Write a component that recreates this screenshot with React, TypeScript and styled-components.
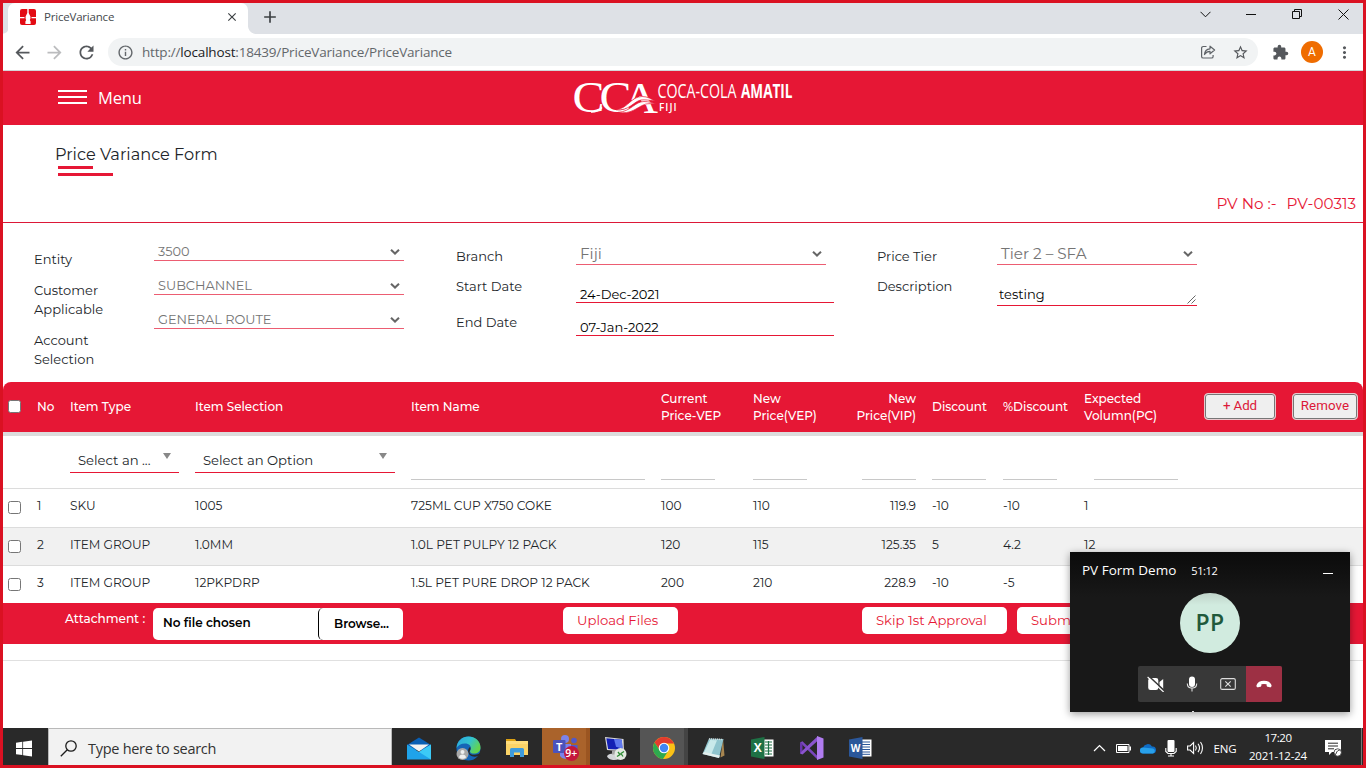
import React from 'react';
import styled, { createGlobalStyle, css } from 'styled-components';
import {
  MdAdd,
  MdArrowBack,
  MdArrowForward,
  MdClose,
  MdExtension,
  MdInfoOutline,
  MdMoreVert,
  MdRefresh,
  MdStarBorder,
} from 'react-icons/md';

const RED = '#e61735';
const BODY = "Montserrat, Inter, 'Liberation Sans', sans-serif";
const SYSTEM = "'Segoe UI', 'Open Sans', 'Noto Sans', sans-serif";

const GlobalStyle = createGlobalStyle`
  *, *::before, *::after { box-sizing: border-box; }
  html, body { margin: 0; padding: 0; background: #fff; overflow: hidden; }
  svg { display: block; flex: none; }
`;

const Screen = styled.div`
  width: 1366px;
  height: 768px;
  border: 3px solid #da1122;
  display: flex;
  flex-direction: column;
  background: #fff;
  position: relative;
  overflow: hidden;
  font-family: ${BODY};
  color: #212529;
`;

const Txt = styled.span<{ $ls?: number }>`
  letter-spacing: ${(p) => p.$ls ?? 0}px;
  white-space: nowrap;
`;

/* ---------- browser ---------- */

const TabStrip = styled.div`
  height: 31px;
  background: #dee1e6;
  display: flex;
  align-items: stretch;
  font-family: ${SYSTEM};
  flex: none;
`;

const StripEdge = styled.div`
  width: 5px;
  background: radial-gradient(circle at 0 0, transparent 5px, #fff 6px) no-repeat 0 100% / 5px 6px;
`;

const Tab = styled.div`
  width: 240px;
  background: #fff;
  border-radius: 7px 7px 0 0;
  display: flex;
  align-items: center;
  padding: 0 9px 3px 12px;
  font-size: 11.5px;
  color: #45494d;
`;

const TabTitle = styled(Txt)`
  margin-left: 8px;
  margin-top: -1px;
  flex: 1;
`;

const TabFoot = styled.div`
  width: 8px;
  background: radial-gradient(circle at 100% 0, #dee1e6 7.5px, #fff 8.3px) no-repeat 0 100% / 8px 8px;
`;

const NewTab = styled.div`
  width: 28px;
  display: flex;
  align-items: center;
  justify-content: center;
  padding-bottom: 4px;
  color: #3c4043;
`;

const WindowButtons = styled.div`
  margin-left: auto;
  display: flex;
  padding-bottom: 9px;
`;

const WindowButton = styled.div<{ $last?: boolean }>`
  width: ${(p) => (p.$last ? 43 : 46)}px;
  padding-left: ${(p) => (p.$last ? 3 : 0)}px;
  display: flex;
  align-items: center;
  justify-content: center;
`;

const Toolbar = styled.div`
  height: 37px;
  flex: none;
  display: flex;
  align-items: center;
  padding-left: 3px;
  border-bottom: 1px solid #d4d6d8;
  font-family: ${SYSTEM};
`;

const ToolSlot = styled.div<{ $muted?: boolean }>`
  width: 32px;
  display: flex;
  justify-content: center;
  color: ${(p) => (p.$muted ? '#bbbcbe' : '#55585c')};
`;

const AddressBar = styled.div`
  width: 1150px;
  height: 28px;
  margin: 0 6px;
  border-radius: 14px;
  background: #f1f3f4;
  display: flex;
  align-items: center;
  padding: 0 8px 0 9px;
  font-size: 13.5px;
  color: #63676b;
`;

const Url = styled(Txt)`
  margin-left: 8px;
  flex: 1;
  b { font-weight: 400; color: #202124; }
`;

const AddressSlot = styled.div`
  width: 44px;
  display: flex;
  justify-content: center;
  &:last-child { width: 20px; }
`;

const Profile = styled.div`
  width: 22px;
  height: 22px;
  border-radius: 50%;
  background: #ef6c00;
  color: #fff;
  font: 12px/22px Roboto, sans-serif;
  text-align: center;
`;

/* ---------- page ---------- */

const Masthead = styled.header`
  height: 54px;
  flex: none;
  background: ${RED};
  display: flex;
  align-items: center;
  padding-left: 55px;
`;

const MenuToggle = styled.div`
  display: flex;
  align-items: center;
  width: 515px;
  color: #fff;
  font: 16.5px/22px ${SYSTEM};
`;

const Bars = styled.div`
  width: 29px;
  height: 14px;
  margin-right: 11px;
  margin-bottom: 2px;
  border-top: 2px solid #fff;
  border-bottom: 2px solid #fff;
  display: flex;
  align-items: center;
  &::before { content: ''; height: 2px; flex: 1; background: #fff; }
`;

const TitleArea = styled.section`
  height: 98px;
  flex: none;
  border-bottom: 1px solid #dc1838;
  display: flex;
  justify-content: space-between;
  padding: 19px 7px 0 52px;
`;

const Heading = styled.h1`
  margin: 0;
  font-size: 16.2px;
  line-height: 20px;
  font-weight: 400;
`;

const Underline = styled.div<{ $w: number; $top: number }>`
  width: ${(p) => p.$w}px;
  height: 3px;
  margin: ${(p) => p.$top}px 0 0 3px;
  background: ${RED};
`;

const VarianceNo = styled.div`
  align-self: flex-end;
  display: flex;
  gap: 10px;
  font-size: 15.2px;
  line-height: 20px;
  color: ${RED};
  margin-bottom: 8px;
`;

const Form = styled.section`
  height: 159px;
  flex: none;
  display: grid;
  grid-template-columns: 422px 421px 1fr;
  padding-left: 31px;
`;

const FormColumn = styled.div`
  display: grid;
  grid-template-columns: 120px 1fr;
  align-items: start;
`;

const Stack = styled.div<{ $top: number }>`
  display: flex;
  flex-direction: column;
  align-items: flex-start;
  padding-top: ${(p) => p.$top}px;
`;

const Label = styled.label<{ $gap?: number }>`
  font-size: 13px;
  line-height: 19px;
  margin-bottom: ${(p) => p.$gap ?? 12}px;
`;

const SelectBox = styled.div<{ $w: number; $large?: boolean }>`
  width: ${(p) => p.$w}px;
  height: ${(p) => (p.$large ? 22 : 18)}px;
  margin-bottom: 16px;
  padding: 0 4px;
  border-bottom: 1px solid #ec5d72;
  display: flex;
  align-items: center;
  justify-content: space-between;
  font-size: ${(p) => (p.$large ? 15.2 : 12.9)}px;
  color: #747474;
`;

const InputBox = styled.div<{ $w: number; $h: number; $gap?: number; $indent?: number }>`
  width: ${(p) => p.$w}px;
  height: ${(p) => p.$h}px;
  margin-bottom: ${(p) => p.$gap ?? 0}px;
  padding: 4px 0 0 ${(p) => p.$indent ?? 4}px;
  border-bottom: 1px solid ${RED};
  display: flex;
  align-items: flex-start;
  justify-content: space-between;
  font-size: 13px;
  line-height: 18px;
  color: #000;
`;

const Grip = styled.svg`
  align-self: flex-end;
  margin: 0 1px 1px 0;
`;

/* ---------- item grid ---------- */

const gridColumns = css`
  display: grid;
  grid-template-columns: 29px 33px 125px 216px 250px 92px 92px 87px 71px 81px 120px 88px 66px;
  padding-left: 5px;
`;

const GridHead = styled.div`
  ${gridColumns}
  height: 54px;
  flex: none;
  align-items: center;
  background: ${RED};
  border-bottom: 4px solid #dcdcdc;
  border-radius: 8px 8px 0 0;
  color: #fff;
  font-size: 12px;
  line-height: 17px;
`;

const HeadCell = styled.div<{ $right?: boolean }>`
  display: flex;
  flex-direction: column;
  align-items: ${(p) => (p.$right ? 'flex-end' : 'flex-start')};
  padding-right: ${(p) => (p.$right ? 16 : 0)}px;
  margin-top: -1px;
  font-weight: 550;
`;

const Check = styled.span`
  width: 13px;
  height: 13px;
  border: 1px solid #767676;
  border-radius: 2.5px;
  background: #fff;
  margin-top: -1px;
`;

const GridButton = styled.button<{ $w: number }>`
  width: ${(p) => p.$w}px;
  height: 27px;
  margin: 0 0 2px;
  padding: 0 0 2px;
  border: 1px solid #e9c8cd;
  box-shadow: inset 0 0 0 1px #767676;
  border-radius: 4px;
  background: #efefef;
  color: #dc1838;
  font: 13.33px Roboto, sans-serif;
`;

const FilterRow = styled.div`
  ${gridColumns}
  height: 53px;
  flex: none;
  border-bottom: 1px solid #dcdcdc;
`;

const FilterSelect = styled.div<{ $w: number }>`
  width: ${(p) => p.$w}px;
  height: 37px;
  border-bottom: 1px solid ${RED};
  display: flex;
  justify-content: space-between;
  padding: 15px 8px 0;
  font-size: 13.2px;
  line-height: 19px;
`;

const Caret = styled.span`
  margin-top: 2px;
  height: 0;
  border: 4px solid transparent;
  border-top: 6px solid #888;
  border-bottom: 0;
`;

const FilterInput = styled.div<{ $w: number; $indent?: number }>`
  width: ${(p) => p.$w}px;
  height: 44px;
  margin-left: ${(p) => p.$indent ?? 0}px;
  border-bottom: 1px solid #c8c8c8;
`;

const DataRow = styled.div<{ $shade?: boolean; $h: number; $last?: boolean }>`
  ${gridColumns}
  height: ${(p) => p.$h}px;
  flex: none;
  background: ${(p) => (p.$shade ? '#f1f1f1' : '#fff')};
  border-bottom: ${(p) => (p.$last ? 0 : 1)}px solid #dcdcdc;
  padding-top: 8px;
  font-size: 12.15px;
  line-height: 18px;
  ${Check} { margin-top: 4px; }
`;

const DataCell = styled(Txt)<{ $right?: boolean }>`
  text-align: ${(p) => (p.$right ? 'right' : 'left')};
  padding-right: ${(p) => (p.$right ? 16 : 0)}px;
`;

const ActionBar = styled.div`
  height: 41px;
  flex: none;
  background: ${RED};
  display: flex;
  align-items: flex-start;
  padding-left: 62px;
`;

const AttachmentLabel = styled(Txt)`
  width: 88px;
  margin-top: 6px;
  font-size: 12.1px;
  line-height: 19px;
  font-weight: 500;
  color: #fff;
`;

const FilePicker = styled.div`
  width: 250px;
  height: 32px;
  margin: 5px 160px 0 0;
  background: #fff;
  border-radius: 5px;
  display: flex;
  font-size: 12px;
  line-height: 30px;
  font-weight: 600;
  color: #000;
  overflow: hidden;
`;

const FileName = styled(Txt)`
  width: 165px;
  padding-left: 10px;
`;

const Browse = styled(Txt)`
  flex: 1;
  padding-left: 15px;
  line-height: 32px;
  border-left: 1px solid #000;
  border-radius: 5px;
`;

const ActionButton = styled.button<{ $w: number; $gap: number }>`
  width: ${(p) => p.$w}px;
  height: 27px;
  margin: 4px ${(p) => p.$gap}px 0 0;
  padding: 0 0 0 14px;
  border: 0;
  border-radius: 5px;
  background: #fff;
  color: ${RED};
  text-align: left;
  font: 13.2px/27px ${BODY};
`;

const PageRest = styled.div`
  flex: 1;
  &::before { content: ''; display: block; height: 17px; border-bottom: 1px solid #e0e0e0; }
`;

/* ---------- call window ---------- */

const CallWindow = styled.aside`
  position: absolute;
  left: 1067px;
  top: 549px;
  width: 280px;
  height: 160px;
  background: linear-gradient(#0b0b0b, #181818 45px);
  box-shadow: 0 2px 8px rgba(0, 0, 0, 0.4);
  display: flex;
  flex-direction: column;
  align-items: center;
  color: #fff;
  font-family: ${SYSTEM};
`;

const CallHeader = styled.div`
  width: 100%;
  height: 41px;
  display: flex;
  align-items: center;
  padding: 0 17px 5px 12px;
  font-size: 13.5px;
`;

const CallTime = styled(Txt)`
  margin-left: 15px;
  flex: 1;
  font-size: 11px;
  font-weight: 500;
`;

const Minimize = styled.span`
  width: 10px;
  height: 1px;
  margin-top: 7px;
  background: #fff;
`;

const Avatar = styled.div`
  width: 60px;
  height: 60px;
  border-radius: 50%;
  background: linear-gradient(#bfd3c9, #d1ebdf 12px);
  color: #20593b;
  font-size: 23px;
  line-height: 59px;
  font-weight: 600;
  text-align: center;
`;

const CallControls = styled.div`
  margin-top: 13px;
  display: flex;
  border-radius: 2px;
  overflow: hidden;
  background: #383838;
`;

const CallButton = styled.div<{ $end?: boolean }>`
  width: 36px;
  height: 36px;
  display: flex;
  align-items: center;
  justify-content: center;
  background: ${(p) => (p.$end ? '#9d3044' : 'transparent')};
`;

const CallHandle = styled.span`
  width: 2px;
  height: 1px;
  margin: auto 34px 0 0;
  background: #ddd;
`;

/* ---------- taskbar ---------- */

const Taskbar = styled.footer`
  height: 37px;
  flex: none;
  background: #292929;
  display: flex;
  align-items: stretch;
  font-family: ${SYSTEM};
  color: #fff;
`;

const StartButton = styled.div`
  width: 45px;
  display: flex;
  align-items: center;
  padding: 3px 0 0 13px;
`;

const SearchBox = styled.div`
  width: 344px;
  margin-right: 3px;
  background: #f2f2f2;
  border: 1px solid #b9b9b9;
  border-bottom: 0;
  display: flex;
  align-items: center;
  padding: 3px 0 0 11px;
  gap: 11px;
  font-size: 14.5px;
  color: #333;
`;

const TaskItem = styled.div<{ $bg?: string; $edge?: string }>`
  width: 49px;
  display: flex;
  align-items: center;
  justify-content: center;
  padding: 3px 1px 0 0;
  ${(p) =>
    p.$bg &&
    css`
      background: linear-gradient(90deg, ${p.$bg} 44px, ${p.$edge} 44px, ${p.$edge} 48px, #292929 48px);
    `}
`;

const Tray = styled.div`
  margin-left: auto;
  display: flex;
  align-items: center;
  padding-top: 3px;
  font-size: 11.5px;
`;

const TrayIcon = styled.div<{ $w: number }>`
  width: ${(p) => p.$w}px;
  display: flex;
  justify-content: center;
`;

const Clock = styled.div`
  width: 74px;
  margin: -2px 3px 0 0;
  display: flex;
  flex-direction: column;
  align-items: center;
  line-height: 18px;
`;

const ShowDesktop = styled.div`
  align-self: stretch;
  width: 2px;
  margin-top: -3px;
  border-left: 1px solid #777;
`;

/* ---------- drawings ---------- */

const Chevron = () => (
  <svg width="10" height="7" viewBox="0 0 10 7">
    <path d="M1 1.700 5 5.500 9 1.700" fill="none" stroke="#666" strokeWidth="2" />
  </svg>
);

const Favicon = () => (
  <svg width="16" height="16" viewBox="0 0 16 16">
    <rect width="16" height="16" rx="2" fill="#e30b13" />
    <path d="M0 8.7h4.500M11.500 8.700H16" stroke="#fff" strokeWidth="1.300" />
    <path d="M7.300 0h1.400v4l1.700 3.500v2.300l-.6 1.200.8 1.500V15H5.400v-2.500l.8-1.500-.6-1.200V7.500L7.300 4z" fill="#fff" />
  </svg>
);

const Logo = () => (
  <svg width="230" height="54" viewBox="0 -10 230 54" fill="#fff">
    <text x="50" y="31.500" fontFamily="'Liberation Serif', serif" fontSize="44" textLength="35" lengthAdjust="spacingAndGlyphs">A</text>
    <path d="M46 19h13.500l6 4 2 11H46z" fill={RED} />
    <path d="M60 18h10v6H60z" fill={RED} />
    <path d="M66 15h4.500l4 9H70z" />
    <g fontFamily="'Liberation Serif', serif" fontSize="44">
      <text x="-0.500" y="31" textLength="32" lengthAdjust="spacingAndGlyphs">C</text>
      <text x="26.500" y="31" textLength="32" lengthAdjust="spacingAndGlyphs">C</text>
    </g>
    <g stroke={RED} strokeWidth="0.700">
      <path d="M43 28.700C55 27.500 58 15.500 69 15.500c6 0 9 2.500 13 4.500-6-.8-10-1.500-14-1C61 20 56 30.500 43 28.700z" />
      <path d="M45 31.400C58 30.500 62 20.500 71 20.500c5 0 8 1.300 12 2.300-6-.3-9-.3-12 .9-7 2.600-13 10-26 7.700z" />
    </g>
    <path d="M18 31c5 .300 8-1.500 11-4.500" stroke="#fff" strokeWidth="1.500" fill="none" />
    <g fontFamily="'Open Sans', sans-serif">
      <text x="84.500" y="16.500" fontSize="19.500" textLength="79" lengthAdjust="spacingAndGlyphs">COCA-COLA</text>
      <text x="168" y="16.500" fontSize="19.500" fontWeight="700" textLength="51.500" lengthAdjust="spacingAndGlyphs">AMATIL</text>
      <text x="86" y="29.500" fontSize="10" fontWeight="600" textLength="17.500" lengthAdjust="spacing">FIJI</text>
    </g>
  </svg>
);

const ShareIcon = () => (
  <svg width="16" height="16" viewBox="0 0 16 16" fill="none" stroke="#5f6368" strokeWidth="1.2">
    <path d="M6.500 2.500H3.200a1.600 1.600 0 0 0-1.600 1.600v8.300A1.600 1.600 0 0 0 3.200 14h8.300a1.600 1.600 0 0 0 1.600-1.600V11" />
    <path d="M4.500 10.500C4.700 7 6.500 5 10 4.800V2.200L14.600 6 10 9.800V7.300c-2.500 0-4 .9-5.500 3.200z" strokeLinejoin="round" />
  </svg>
);

const CameraOff = () => (
  <svg width="18" height="16" viewBox="0 0 18 16">
    <path d="M2.500 2H9a2.300 2.300 0 0 1 2.300 2.300v7.400A2.300 2.300 0 0 1 9 14H3.500a2.300 2.300 0 0 1-2.300-2.300V4zM12.500 6l3.700-3v10l-3.700-3z" fill="#fff" />
    <path d="M1.600 0l16 15" stroke="#383838" strokeWidth="1.600" />
    <path d="M.6 1l16 15" stroke="#fff" strokeWidth="1.1" />
  </svg>
);

const CallMic = () => (
  <svg width="12" height="16" viewBox="0 0 12 16">
    <rect x="3" y="0.500" width="6" height="10.500" rx="3" fill="#fff" />
    <path d="M1.300 7.500c0 6.200 9.400 6.200 9.400 0M6 12v3.500" fill="none" stroke="#ddd" strokeWidth="1.100" />
  </svg>
);

const StopShare = () => (
  <svg width="16" height="12" viewBox="0 0 16 12" fill="none" stroke="#ddd" strokeWidth="1.1">
    <rect x="0.700" y="0.600" width="14.600" height="10.800" rx="1.500" />
    <path d="M5.300 3.300l5.400 5.400M10.700 3.300L5.300 8.700" />
  </svg>
);

const HangUp = () => (
  <svg width="16" height="8" viewBox="0 0 16 8">
    <path d="M.5 5.200C1.500 2.300 4.300.8 8 .8s6.500 1.500 7.500 4.400c.3 1.200-.5 2.300-1.700 2l-2-.4c-.8-.200-1.200-.8-1.200-1.600V4.300a9 9 0 0 0-5.200 0v.9c0 .8-.4 1.400-1.200 1.600l-2 .4C1 7.500.2 6.400.5 5.200z" fill="#fff" />
  </svg>
);

const WindowsLogo = () => (
  <svg width="16" height="17" viewBox="0 0 16 17" fill="#fff">
    <path d="M0 2.700l6.300-.9v6.200H0zM7.100 1.700L16 .4V8H7.100zM0 8.900h6.300v6.200L0 14.200zM7.100 8.900H16v7.600l-8.900-1.300z" />
  </svg>
);

const SearchGlass = () => (
  <svg width="17" height="17" viewBox="0 0 17 17" fill="none" stroke="#1d1d1d" strokeWidth="1.3">
    <circle cx="11" cy="6" r="5.200" />
    <path d="M7.300 9.700L.8 16.200" />
  </svg>
);

const MailApp = () => (
  <svg width="24" height="23" viewBox="0 0 24 23">
    <path d="M0 8L12 .5 24 8v5H0z" fill="#0a5fb4" />
    <path d="M0 7.500l12 7.500 12-7.500V22.500H0z" fill="#1fa3ea" />
    <path d="M24 7.500V22.500L12 15z" fill="#3ccaf6" />
    <path d="M2 7.500h20L12 14.500z" fill="#f2f2f2" />
  </svg>
);

const EdgeApp = () => (
  <svg width="25" height="25" viewBox="0 0 25 25">
    <defs>
      <linearGradient id="edgeTop" x1="0" y1="0" x2="1" y2="0.500">
        <stop offset="0" stopColor="#2aa6e0" />
        <stop offset="0.550" stopColor="#33c3d0" />
        <stop offset="1" stopColor="#63d44d" />
      </linearGradient>
    </defs>
    <circle cx="12.500" cy="12.500" r="12" fill="#1565b6" />
    <path d="M.5 12C1 5 6 .5 12.500.5S24.500 5 24.500 11.500c0 4-3 6-6.500 6-4 0-4.500-2-3.500-3.500 1.500-4-1.500-6.500-5.500-6.500C5 7.500 2 9.500.5 12z" fill="url(#edgeTop)" />
    <path d="M14 14.500c-1.500 3 1 4.500 4.500 4.300 2.500-.1 4-.8 5.500-1.800l1-4v6l-3 1c-5 2-10-1-10-5 0-2.500 2-4 2-4 .8 1 .5 2.500 0 3.500z" fill="#292929" />
    <circle cx="6.500" cy="18" r="6" fill="#a9a9a9" />
    <circle cx="6.500" cy="16" r="2" fill="#efefef" />
    <path d="M3 21.500c0-4 7-4 7 0-2 1.800-5 1.800-7 0z" fill="#efefef" />
  </svg>
);

const FolderApp = () => (
  <svg width="22" height="20" viewBox="0 0 22 20">
    <path d="M0 1h9l1.500 2.500H0z" fill="#dba013" />
    <path d="M0 3h22v14H0z" fill="#fbd367" />
    <path d="M0 3h22v3H0z" fill="#ffdd7c" />
    <path d="M4 19v-7.500A1.500 1.500 0 0 1 5.500 10h11a1.500 1.500 0 0 1 1.500 1.500V19h-4v-4.500H8V19z" fill="#3e9bdc" />
  </svg>
);

const TeamsApp = () => (
  <svg width="27" height="26" viewBox="0 0 27 26">
    <circle cx="12" cy="4" r="4" fill="#7b83eb" />
    <circle cx="21" cy="5.500" r="2.800" fill="#5059c9" />
    <path d="M16 10h8.500v8a4 4 0 0 1-6 3z" fill="#5059c9" />
    <path d="M7 9h11v9a6 6 0 0 1-11 3z" fill="#7b83eb" />
    <rect x="0" y="5" width="12.500" height="13" rx="1" fill="#4b53bc" />
    <text x="6.300" y="15.500" textAnchor="middle" fontFamily="'Open Sans', sans-serif" fontWeight="700" fontSize="11" fill="#fff">T</text>
    <circle cx="18.500" cy="18.500" r="7.500" fill="#c4173c" />
    <text x="18.300" y="22.300" textAnchor="middle" fontFamily="'Open Sans', sans-serif" fontWeight="600" fontSize="10.500" fill="#fff">9+</text>
  </svg>
);

const RemoteApp = () => (
  <svg width="24" height="25" viewBox="0 0 24 25">
    <path d="M4 20c3-3 8-3 12-1v4c-4 2-11 1-12-3z" fill="#d3d5d8" />
    <path d="M2 1l18.500 2L21 15.500 4 14z" fill="#dadada" />
    <path d="M3.300 2.300l15.500 1.500.8 10-14.500-.8z" fill="#1420b4" />
    <path d="M11 3l7.800.8.8 9-6.600-2z" fill="#5f78ee" />
    <path d="M9 14.500h5v4H9z" fill="#a6a6a6" />
    <circle cx="17.500" cy="18" r="6" fill="#e4eae2" />
    <path d="M14 20.500l3-2-2-2.500M21 15.500l-3 2 2 3" stroke="#2c8b33" strokeWidth="1.300" fill="none" />
  </svg>
);

const ChromeApp = () => (
  <svg width="22" height="22" viewBox="0 0 22 22">
    <circle cx="11" cy="11" r="11" fill="#fbc116" />
    <path d="M1.500 5.500A11 11 0 0 1 20.500 5.500L21 6.500H11L7 13.500z" fill="#e33b2e" />
    <path d="M1.500 5.500A11 11 0 0 0 10 22L15.500 13.500 7 13.500z" fill="#2da94f" />
    <circle cx="11" cy="11" r="5.300" fill="#fff" />
    <circle cx="11" cy="11" r="4.200" fill="#4285f4" />
  </svg>
);

const NotepadApp = () => (
  <svg width="23" height="22" viewBox="0 0 23 22">
    <path d="M21 1.500l1.500 17-4 2z" fill="#a78550" />
    <path d="M7 1.500l14.500.5-4.500 19L.5 17z" fill="#8fc4cd" />
    <path d="M8 3l7 .3L9 18l-7.500-1.500z" fill="#c9e9ea" />
    <path d="M.5 17l16.500 4 1-2.500L2 15z" fill="#e4efee" />
    <path d="M7 2l14 .500" stroke="#d8dada" strokeWidth="1.500" strokeDasharray="1 1" />
  </svg>
);

const OfficeApp = ({ letter, tint }: { letter: string; tint: string }) => (
  <svg width="23" height="22" viewBox="0 0 23 22">
    <rect x="12" y="2.500" width="10.500" height="17" fill="#fff" />
    {letter === 'W' ? (
      <path d="M13 5h8M13 7.500h8M13 10h8M13 12.500h8M13 15h8M13 17.300h8" stroke={tint} strokeWidth="1" />
    ) : (
      <path d="M14 5h7M14 8h7M14 11h7M14 14h7M14 17h7M17.500 4v14" stroke={tint} strokeWidth="1.200" />
    )}
    <path d="M0 2.500L13.500 0v22L0 19.500z" fill={tint} />
    <text x="6.700" y="15" textAnchor="middle" fontFamily="'Open Sans', sans-serif" fontWeight="700" fontSize={letter === 'W' ? 10 : 12} fill="#fff">{letter}</text>
  </svg>
);

const StudioApp = () => (
  <svg width="25" height="24" viewBox="0 0 25 24">
    <path d="M1 6.500l2.500-1.200L19 20.500V24z" fill="#7a46bd" />
    <path d="M1 6.500L3.500 8v8L1 17.500z" fill="#6a35ac" />
    <path d="M1 17.500l2.500 1L19 4.500V0L3.500 14.500z" fill="#8b54cf" />
    <path d="M18 0l6.500 2.500v19L18 24z" fill="#b07cf0" />
  </svg>
);

const ActionCenter = () => (
  <svg width="17" height="17" viewBox="0 0 17 17">
    <path d="M0 0h16v12h-9l-3 3v-3H0z" fill="#fff" />
    <path d="M3 3.200h10M3 6h10M3 8.800h6" stroke="#292929" strokeWidth="1" />
    <circle cx="12.700" cy="12.500" r="3.700" fill="#fff" stroke="#292929" strokeWidth="0.800" />
    <path d="M14.500 10.500c-3-.5-3 3.500-4.500 4.500" stroke="#292929" strokeWidth="1" fill="none" />
  </svg>
);

/* ---------- data ---------- */

const heads: { lines: string[]; right?: boolean }[] = [
  { lines: ['No'] },
  { lines: ['Item Type'] },
  { lines: ['Item Selection'] },
  { lines: ['Item Name'] },
  { lines: ['Current', 'Price-VEP'] },
  { lines: ['New', 'Price(VEP)'] },
  { lines: ['New', 'Price(VIP)'], right: true },
  { lines: ['Discount'] },
  { lines: ['%Discount'] },
  { lines: ['Expected', 'Volumn(PC)'] },
];

const rows = [
  ['1', 'SKU', '1005', '725ML CUP X750 COKE', '100', '110', '119.9', '-10', '-10', '1'],
  ['2', 'ITEM GROUP', '1.0MM', '1.0L PET PULPY 12 PACK', '120', '115', '125.35', '5', '4.2', '12'],
  ['3', 'ITEM GROUP', '12PKPDRP', '1.5L PET PURE DROP 12 PACK', '200', '210', '228.9', '-10', '-5', ''],
];
const rowHeights = [39, 38, 37];

export default function App() {
  return (
    <Screen>
      <GlobalStyle />
      <TabStrip>
        <StripEdge />
        <Tab>
          <Favicon />
          <TabTitle $ls={-0.2}>PriceVariance</TabTitle>
          <MdClose size={14} color="#3c4043" />
        </Tab>
        <TabFoot />
        <NewTab><MdAdd size={20} /></NewTab>
        <WindowButtons>
          <WindowButton>
            <svg width="11" height="7" viewBox="0 0 11 7"><path d="M.5.800l5 5 5-5" fill="none" stroke="#111" /></svg>
          </WindowButton>
          <WindowButton>
            <svg width="10" height="1" viewBox="0 0 10 1"><path d="M0 .500h10" stroke="#111" /></svg>
          </WindowButton>
          <WindowButton>
            <svg width="10" height="10" viewBox="0 0 10 10" fill="none" stroke="#111"><path d="M.5 2.500h7v7h-7zM2.500 2.500v-2h7v7h-2" /></svg>
          </WindowButton>
          <WindowButton $last>
            <svg width="11" height="11" viewBox="0 0 11 11"><path d="M.5.500l10 10M10.500.500l-10 10" stroke="#111" /></svg>
          </WindowButton>
        </WindowButtons>
      </TabStrip>

      <Toolbar>
        <ToolSlot><MdArrowBack size={21} /></ToolSlot>
        <ToolSlot $muted><MdArrowForward size={21} /></ToolSlot>
        <ToolSlot><MdRefresh size={21} /></ToolSlot>
        <AddressBar>
          <MdInfoOutline size={17} />
          <Url $ls={-0.18}>http://<b>localhost</b>:18439/PriceVariance/PriceVariance</Url>
          <AddressSlot><ShareIcon /></AddressSlot>
          <AddressSlot><MdStarBorder size={17} color="#55585c" /></AddressSlot>
        </AddressBar>
        <ToolSlot><MdExtension size={17} /></ToolSlot>
        <ToolSlot><Profile>A</Profile></ToolSlot>
        <ToolSlot><MdMoreVert size={19} /></ToolSlot>
      </Toolbar>

      <Masthead>
        <MenuToggle>
          <Bars />
          <Txt $ls={-0.15}>Menu</Txt>
        </MenuToggle>
        <Logo />
      </Masthead>

      <TitleArea>
        <div>
          <Heading>Price Variance Form</Heading>
          <Underline $w={35} $top={2} />
          <Underline $w={55} $top={4} />
        </div>
        <VarianceNo>
          <Txt>PV No :-</Txt>
          <Txt>PV-00313</Txt>
        </VarianceNo>
      </TitleArea>

      <Form>
        <FormColumn>
          <Stack $top={27}>
            <Label>Entity</Label>
            <Label>Customer<br />Applicable</Label>
            <Label>Account<br />Selection</Label>
          </Stack>
          <Stack $top={20}>
            <SelectBox $w={250}><Txt>3500</Txt><Chevron /></SelectBox>
            <SelectBox $w={250}><Txt>SUBCHANNEL</Txt><Chevron /></SelectBox>
            <SelectBox $w={250}><Txt>GENERAL ROUTE</Txt><Chevron /></SelectBox>
          </Stack>
        </FormColumn>
        <FormColumn>
          <Stack $top={24}>
            <Label $gap={11}>Branch</Label>
            <Label $gap={17}>Start Date</Label>
            <Label>End Date</Label>
          </Stack>
          <Stack $top={20}>
            <SelectBox $w={250} $large><Txt>Fiji</Txt><Chevron /></SelectBox>
            <InputBox $w={258} $h={22} $gap={11}><Txt>24-Dec-2021</Txt></InputBox>
            <InputBox $w={258} $h={22}><Txt>07-Jan-2022</Txt></InputBox>
          </Stack>
        </FormColumn>
        <FormColumn>
          <Stack $top={24}>
            <Label $gap={11}>Price Tier</Label>
            <Label>Description</Label>
          </Stack>
          <Stack $top={20}>
            <SelectBox $w={200} $large><Txt>Tier 2 – SFA</Txt><Chevron /></SelectBox>
            <InputBox $w={200} $h={25} $indent={2}>
              <Txt>testing</Txt>
              <Grip width="9" height="9" viewBox="0 0 9 9">
                <path d="M.5 8.500l8-8M4.500 8.500l4-4" stroke="#555" strokeWidth="0.900" />
              </Grip>
            </InputBox>
          </Stack>
        </FormColumn>
      </Form>

      <GridHead>
        <Check />
        {heads.map((head, i) => (
          <HeadCell key={i} $right={head.right}>
            {head.lines.map((text) => <Txt key={text}>{text}</Txt>)}
          </HeadCell>
        ))}
        <GridButton $w={72}><Txt $ls={-0.1}>+ Add</Txt></GridButton>
        <GridButton $w={66}><Txt $ls={0.1}>Remove</Txt></GridButton>
      </GridHead>
      <FilterRow>
        <span />
        <span />
        <FilterSelect $w={109}><Txt>Select an ...</Txt><Caret /></FilterSelect>
        <FilterSelect $w={200}><Txt>Select an Option</Txt><Caret /></FilterSelect>
        <FilterInput $w={234} />
        <FilterInput $w={54} />
        <FilterInput $w={54} />
        <FilterInput $w={54} $indent={17} />
        <FilterInput $w={54} />
        <FilterInput $w={54} />
        <FilterInput $w={84} $indent={10} />
      </FilterRow>
      {rows.map((row, r) => (
        <DataRow key={r} $h={rowHeights[r]} $shade={r === 1} $last={r === 2}>
          <Check />
          {row.map((text, c) => (
            <DataCell key={c} $right={c === 6}>{text}</DataCell>
          ))}
        </DataRow>
      ))}
      <ActionBar>
        <AttachmentLabel>Attachment :</AttachmentLabel>
        <FilePicker>
          <FileName>No file chosen</FileName>
          <Browse>Browse...</Browse>
        </FilePicker>
        <ActionButton $w={115} $gap={184}>Upload Files</ActionButton>
        <ActionButton $w={145} $gap={10}>Skip 1st Approval</ActionButton>
        <ActionButton $w={90} $gap={0}>Submit</ActionButton>
      </ActionBar>
      <PageRest />

      <Taskbar>
        <StartButton><WindowsLogo /></StartButton>
        <SearchBox><SearchGlass /><Txt $ls={-0.28}>Type here to search</Txt></SearchBox>
        <TaskItem><MailApp /></TaskItem>
        <TaskItem><EdgeApp /></TaskItem>
        <TaskItem><FolderApp /></TaskItem>
        <TaskItem $bg="#aa632b" $edge="#9b5521"><TeamsApp /></TaskItem>
        <TaskItem><RemoteApp /></TaskItem>
        <TaskItem $bg="#555" $edge="#444"><ChromeApp /></TaskItem>
        <TaskItem><NotepadApp /></TaskItem>
        <TaskItem><OfficeApp letter="X" tint="#1e7145" /></TaskItem>
        <TaskItem><StudioApp /></TaskItem>
        <TaskItem><OfficeApp letter="W" tint="#2b579a" /></TaskItem>
        <Tray>
          <TrayIcon $w={24}>
            <svg width="13" height="8" viewBox="0 0 13 8"><path d="M1 7l5.500-5.500L12 7" fill="none" stroke="#fff" strokeWidth="1.200" /></svg>
          </TrayIcon>
          <TrayIcon $w={25}>
            <svg width="15" height="9" viewBox="0 0 15 9"><path d="M.5.500h12.500v8H.5z" fill="none" stroke="#fff" /><path d="M2 2h9.500v5H2zM13.500 2.500H15v4h-1.500z" fill="#fff" /></svg>
          </TrayIcon>
          <TrayIcon $w={23}>
            <svg width="16" height="11" viewBox="0 0 16 11">
              <path d="M3 10.500a3 3 0 0 1 0-6A5 5 0 0 1 12 3.500a3.500 3.500 0 0 1 1 7z" fill="#0f6cc4" />
              <path d="M3 10.500a3 3 0 0 1 0-6L8 5l5 .5a2.600 2.600 0 0 1 0 5z" fill="#28a0ea" />
            </svg>
          </TrayIcon>
          <TrayIcon $w={23}>
            <svg width="12" height="17" viewBox="0 0 12 17"><rect x="2.500" width="7" height="12" rx="1" fill="#fff" /><path d="M.8 8v3.500L3 13.500h6l2.200-2V8M6 13.500v2.500M3 16h6" fill="none" stroke="#fff" strokeWidth="1.100" /></svg>
          </TrayIcon>
          <TrayIcon $w={27}>
            <svg width="17" height="14" viewBox="0 0 17 14" fill="none" stroke="#fff" strokeWidth="1.100">
              <path d="M.600 5h2.500l3.500-3.500v11L3.100 9H.600zM8.500 4.500c1 1.500 1 3.500 0 5M11 2.800c1.800 2.500 1.800 6 0 8.400M13.500 1c2.600 3.500 2.600 8.500 0 12" />
            </svg>
          </TrayIcon>
          <TrayIcon $w={32}><Txt $ls={-0.2}>ENG</Txt></TrayIcon>
          <Clock>
            <Txt $ls={-0.45}>17:20</Txt>
            <Txt $ls={-0.2}>2021-12-24</Txt>
          </Clock>
          <TrayIcon $w={30}><ActionCenter /></TrayIcon>
          <TrayIcon $w={13} />
          <ShowDesktop />
        </Tray>
      </Taskbar>

      <CallWindow>
        <CallHeader>
          <Txt>PV Form Demo</Txt>
          <CallTime $ls={-0.4}>51:12</CallTime>
          <Minimize />
        </CallHeader>
        <Avatar><Txt $ls={0.3}>PP</Txt></Avatar>
        <CallControls>
          <CallButton><CameraOff /></CallButton>
          <CallButton><CallMic /></CallButton>
          <CallButton><StopShare /></CallButton>
          <CallButton $end><HangUp /></CallButton>
        </CallControls>
        <CallHandle />
      </CallWindow>
    </Screen>
  );
}
